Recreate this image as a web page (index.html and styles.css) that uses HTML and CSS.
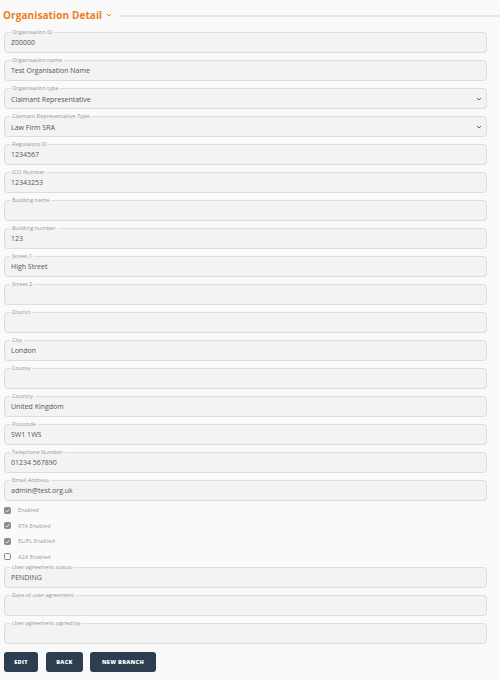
FILE: index.html
```html
<!DOCTYPE html>
<html>
<head>
<meta charset="utf-8">
<link rel="stylesheet" href="styles.css">
</head>
<body>
<div class="page">
  <div class="header">
    <span class="title">Organisation Detail</span>
    <svg class="caret" width="6" height="4" viewBox="0 0 6 4"><path d="M1 1 L3 3 L5 1" fill="none" stroke="#f07d1a" stroke-width="1"/></svg>
    <span class="rule"></span>
  </div>
  <form class="form">
    <fieldset class="field"><legend>Organisation ID</legend><div class="val">Z00000</div></fieldset>
    <fieldset class="field"><legend>Organisation name</legend><div class="val">Test Organisation Name</div></fieldset>
    <fieldset class="field"><legend>Organisation type</legend><div class="val sel">Claimant Representative<svg width="6" height="4" viewBox="0 0 6 4"><path d="M1 1 L3 3 L5 1" fill="none" stroke="#666" stroke-width="1"/></svg></div></fieldset>
    <fieldset class="field"><legend>Claimant Representative Type</legend><div class="val sel">Law Firm SRA<svg width="6" height="4" viewBox="0 0 6 4"><path d="M1 1 L3 3 L5 1" fill="none" stroke="#666" stroke-width="1"/></svg></div></fieldset>
    <fieldset class="field"><legend>Regulatory ID</legend><div class="val">1234567</div></fieldset>
    <fieldset class="field"><legend>ICO Number</legend><div class="val">12343253</div></fieldset>
    <fieldset class="field"><legend>Building name</legend><div class="val"></div></fieldset>
    <fieldset class="field"><legend>Building number</legend><div class="val">123</div></fieldset>
    <fieldset class="field"><legend>Street 1</legend><div class="val">High Street</div></fieldset>
    <fieldset class="field"><legend>Street 2</legend><div class="val"></div></fieldset>
    <fieldset class="field"><legend>District</legend><div class="val"></div></fieldset>
    <fieldset class="field"><legend>City</legend><div class="val">London</div></fieldset>
    <fieldset class="field"><legend>County</legend><div class="val"></div></fieldset>
    <fieldset class="field"><legend>Country</legend><div class="val">United Kingdom</div></fieldset>
    <fieldset class="field"><legend>Postcode</legend><div class="val">SW1 1WS</div></fieldset>
    <fieldset class="field"><legend>Telephone Number</legend><div class="val">01234 567890</div></fieldset>
    <fieldset class="field"><legend>Email Address</legend><div class="val">admin@test.org.uk</div></fieldset>
    <div class="checks">
      <div class="check"><span class="box on"><svg width="7" height="7" viewBox="0 0 7 7"><path d="M1.8 3.6 L3 4.8 L5.3 2.3" fill="none" stroke="#fff" stroke-width="0.9"/></svg></span><span class="clabel">Enabled</span></div>
      <div class="check"><span class="box on"><svg width="7" height="7" viewBox="0 0 7 7"><path d="M1.8 3.6 L3 4.8 L5.3 2.3" fill="none" stroke="#fff" stroke-width="0.9"/></svg></span><span class="clabel">RTA Enabled</span></div>
      <div class="check"><span class="box on"><svg width="7" height="7" viewBox="0 0 7 7"><path d="M1.8 3.6 L3 4.8 L5.3 2.3" fill="none" stroke="#fff" stroke-width="0.9"/></svg></span><span class="clabel">EL/PL Enabled</span></div>
      <div class="check"><span class="box"></span><span class="clabel">A2A Enabled</span></div>
    </div>
    <fieldset class="field"><legend>User agreement status</legend><div class="val">PENDING</div></fieldset>
    <fieldset class="field"><legend>Date of user agreement</legend><div class="val"></div></fieldset>
    <fieldset class="field"><legend>User agreement signed by</legend><div class="val"></div></fieldset>
    <div class="buttons">
      <button type="button" class="btn b-edit">EDIT</button>
      <button type="button" class="btn b-back">BACK</button>
      <button type="button" class="btn b-new">NEW BRANCH</button>
    </div>
  </form>
</div>
</body>
</html>
```

FILE: styles.css
```css
html, body {
  margin: 0;
  padding: 0;
  background: #fafafa;
}
body {
  font-family: "Open Sans", "Liberation Sans", sans-serif;
  color: #555;
}
.page {
  padding: 0 13px 0 4px;
}
.header {
  display: flex;
  align-items: center;
  height: 29px;
  margin-left: -1px;
  margin-right: -13px;
}
.title {
  font-size: 10px;
  font-weight: 700;
  color: #f07d1a;
  letter-spacing: 0.1px;
}
.caret {
  margin: 1px 7px 0 4px;
}
.rule {
  flex: 1;
  height: 2px;
  background: #e8e8e8;
  margin-top: 2px;
}
.form {
  display: flex;
  flex-direction: column;
}
.field {
  margin: 0 0 4px;
  padding: 0 5px 2px;
  border: 1px solid #dddddd;
  border-radius: 4px;
  background-color: #f3f3f3;
  min-width: 0;
}
.field legend {
  font-size: 5.6px;
  line-height: 7px;
  color: #9a9a9a;
  padding: 0 2px;
  margin-left: 0;
}
.val {
  height: 14px;
  line-height: 13px;
  font-size: 7px;
  color: #555;
  padding-left: 1px;
}
.sel {
  display: flex;
  justify-content: space-between;
  align-items: center;
}
.sel svg {
  margin-right: -1px;
}
.checks {
  display: flex;
  flex-direction: column;
  gap: 7.5px;
  padding: 1px 0 3px;
}
.check {
  display: flex;
  align-items: center;
  height: 8px;
}
.box {
  width: 7px;
  height: 7px;
  box-sizing: border-box;
  border: 1px solid #888;
  border-radius: 1.5px;
  margin-right: 7px;
  display: flex;
}
.box.on {
  background: #8c8c8c;
  border-color: #8c8c8c;
}
.box.on svg {
  margin: -1px;
}
.clabel {
  font-size: 5.6px;
  color: #9a9a9a;
}
.buttons {
  display: flex;
  gap: 7px;
  margin-top: 4px;
}
.btn {
  height: 20px;
  border: none;
  border-radius: 3px;
  background: #2c3e50;
  color: #fff;
  font-family: "Open Sans", "Liberation Sans", sans-serif;
  font-size: 5.6px;
  font-weight: 800;
  letter-spacing: 0.3px;
  padding: 0;
}
.b-edit { width: 34px; }
.b-back { width: 37px; margin-left: 1px; }
.b-new { width: 66px; }
```
